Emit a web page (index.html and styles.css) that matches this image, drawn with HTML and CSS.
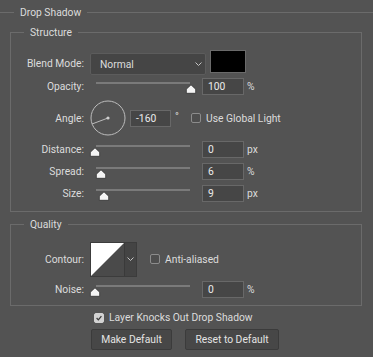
FILE: index.html
```html
<!DOCTYPE html>
<html lang="en">
<head>
  <meta charset="UTF-8">
  <title>Drop Shadow</title>
  <link rel="stylesheet" href="styles.css">
</head>
<body>
  <fieldset class="outer">
    <legend>Drop Shadow</legend>

    <fieldset class="box structure">
      <legend>Structure</legend>
      <div class="row blend">
        <label class="lbl">Blend Mode:</label>
        <div class="select"><span>Normal</span><svg class="chev" width="7" height="5" viewBox="0 0 7 5"><polyline points="0.5,0.5 3.5,3.5 6.5,0.5" /></svg></div>
        <span class="swatch"></span>
      </div>
      <div class="row opacity">
        <label class="lbl">Opacity:</label>
        <div class="slider"><span class="thumb" style="left:100%"><svg width="11" height="10" viewBox="0 0 11 10"><path d="M5.5 0.8 L10.2 5.2 V9.3 H0.8 V5.2 Z" /></svg></span></div>
        <span class="field">100</span>
        <span class="unit">%</span>
      </div>
      <div class="row angle">
        <label class="lbl">Angle:</label>
        <svg class="dial" width="36" height="36" viewBox="0 0 36 36">
          <circle cx="18" cy="18" r="17" />
          <line x1="18" y1="18" x2="2" y2="24" />
          <circle class="dot" cx="18" cy="18" r="1.6" />
        </svg>
        <span class="field short">-160</span>
        <span class="deg">°</span>
        <span class="check"></span>
        <span class="check-text">Use Global Light</span>
      </div>
      <div class="row">
        <label class="lbl">Distance:</label>
        <div class="slider"><span class="thumb" style="left:0%"><svg width="11" height="10" viewBox="0 0 11 10"><path d="M5.5 0.8 L10.2 5.2 V9.3 H0.8 V5.2 Z" /></svg></span></div>
        <span class="field">0</span>
        <span class="unit">px</span>
      </div>
      <div class="row">
        <label class="lbl">Spread:</label>
        <div class="slider"><span class="thumb" style="left:6%"><svg width="11" height="10" viewBox="0 0 11 10"><path d="M5.5 0.8 L10.2 5.2 V9.3 H0.8 V5.2 Z" /></svg></span></div>
        <span class="field">6</span>
        <span class="unit">%</span>
      </div>
      <div class="row">
        <label class="lbl">Size:</label>
        <div class="slider"><span class="thumb" style="left:9.4%"><svg width="11" height="10" viewBox="0 0 11 10"><path d="M5.5 0.8 L10.2 5.2 V9.3 H0.8 V5.2 Z" /></svg></span></div>
        <span class="field">9</span>
        <span class="unit">px</span>
      </div>
    </fieldset>

    <fieldset class="box quality">
      <legend>Quality</legend>
      <div class="row contour-row">
        <label class="lbl">Contour:</label>
        <div class="contour">
          <svg class="curve" width="34" height="34" viewBox="0 0 34 34"><rect width="34" height="34" fill="#4a4a4a" /><polygon points="0,0 34,0 0,34" fill="#fff" /></svg>
          <span class="drop"><svg class="chev" width="7" height="5" viewBox="0 0 7 5"><polyline points="0.5,0.5 3.5,3.5 6.5,0.5" /></svg></span>
        </div>
        <span class="check"></span>
        <span class="check-text">Anti-aliased</span>
      </div>
      <div class="row">
        <label class="lbl">Noise:</label>
        <div class="slider"><span class="thumb" style="left:0%"><svg width="11" height="10" viewBox="0 0 11 10"><path d="M5.5 0.8 L10.2 5.2 V9.3 H0.8 V5.2 Z" /></svg></span></div>
        <span class="field">0</span>
        <span class="unit">%</span>
      </div>
    </fieldset>

    <div class="knock">
      <span class="check on"><svg width="10" height="10" viewBox="0 0 10 10"><polyline points="2,5 4.2,7.3 8,2.6" /></svg></span>
      <span class="check-text">Layer Knocks Out Drop Shadow</span>
    </div>

    <div class="buttons">
      <button class="btn make">Make Default</button>
      <button class="btn reset">Reset to Default</button>
    </div>
  </fieldset>
</body>
</html>
```

FILE: styles.css
```css
* {margin:0; padding:0; box-sizing:border-box}
body {width:373px; height:357px; overflow:hidden; background:#535353; color:#dcdcdc; font-family:Roboto, "Noto Sans", sans-serif; font-size:10.3px;}

fieldset {border:0; min-width:0}
legend {line-height:15px; padding:0 6px;}

.outer {margin-top:5px; border-top:1px solid #6b6b6b;}
.outer > legend {margin-left:14px;}

.box {border:1px solid #6b6b6b; margin:5px 11px 0 10px;}
.box > legend {margin-left:13px;}
.structure {padding:10px 0 9px;}
.quality {padding:10px 0 7px;}

.row {display:flex; align-items:flex-start; height:17px; margin-top:5px;}
.lbl {width:73px; text-align:right; line-height:17px;}

/* blend mode */
.row.blend {height:25px; margin-top:0}
.blend .lbl {margin-top:3px; line-height:22px}
.select {display:flex; align-items:center; justify-content:space-between; margin:3px 0 0 6px; width:116px; height:22px; padding:0 3px 0 9px; background:#454545; border:1px solid #5c5c5c; border-radius:2px;}
.chev {fill:none; stroke:#c4c4c4; stroke-width:1;}
.swatch {margin-left:4px; width:36px; height:23px; background:#000; border:1px solid #6a6a6a;}
.row.opacity {margin-top:3px}

/* sliders */
.slider {position:relative; margin:4px 0 0 11px; width:96px; height:13px;}
.slider::before {content:""; display:block; margin:0 1px; height:2px; background:#7a7a7a;}
.thumb {position:absolute; top:2px; transform:translateX(-50%); width:11px; height:10px;}
.thumb svg {display:block; fill:#f4f4f4; stroke:#2e2e2e; stroke-width:0.8; stroke-linejoin:round;}
.field {margin-left:11px; width:42px; height:17px; padding-left:5px; line-height:15px; color:#ececec; background:#464646; border:1px solid #686868;}
.unit {margin-left:3px; line-height:17px;}

/* angle */
.row.angle {height:36px;}
.angle .lbl {margin-top:10px}
.dial {margin-left:6px; fill:none; stroke:#bcbcbc; stroke-width:1;}
.dial .dot {fill:#d0d0d0; stroke:none}
.field.short {margin:10px 0 0 4px; width:41px;}
.deg {margin:8px 0 0 4px; width:11px; line-height:17px;}
.check {display:flex; align-items:center; justify-content:center; width:10px; height:10px; border:1px solid #8c8c8c; border-radius:2px; background:#4e4e4e;}
.angle .check {margin:13px 0 0 5px;}
.check-text {margin-left:5px; line-height:17px;}
.angle .check-text {margin-top:10px}

/* contour */
.row.contour-row {height:35px; margin-top:0}
.contour-row .lbl {margin-top:9px}
.contour {display:flex; margin-left:6px; height:35px; border:1px solid #3c3c3c; background:#444;}
.curve {display:block; width:34px; height:33px; border-right:1px solid #3a3a3a;}
.drop {display:flex; align-items:center; justify-content:center; width:11px;}
.contour-row .check {margin:12px 0 0 13px;}
.contour-row .check-text {margin-top:9px}
.row.contour-row + .row {margin-top:4px}

/* bottom */
.knock {display:flex; align-items:center; margin:6px 0 0 94px; height:11px;}
.check.on {background:#d2d2d2; border-color:#d2d2d2;}
.check.on svg {fill:none; stroke:#3a3a3a; stroke-width:1.6;}
.buttons {display:flex; gap:13px; margin:6px 0 0 91px;}
.btn {height:21px; font:inherit; color:#e4e4e4; background:#474747; border:1px solid #3b3b3b; border-radius:2px;}
.btn.make {width:81px;}
.btn.reset {width:94px;}
```
